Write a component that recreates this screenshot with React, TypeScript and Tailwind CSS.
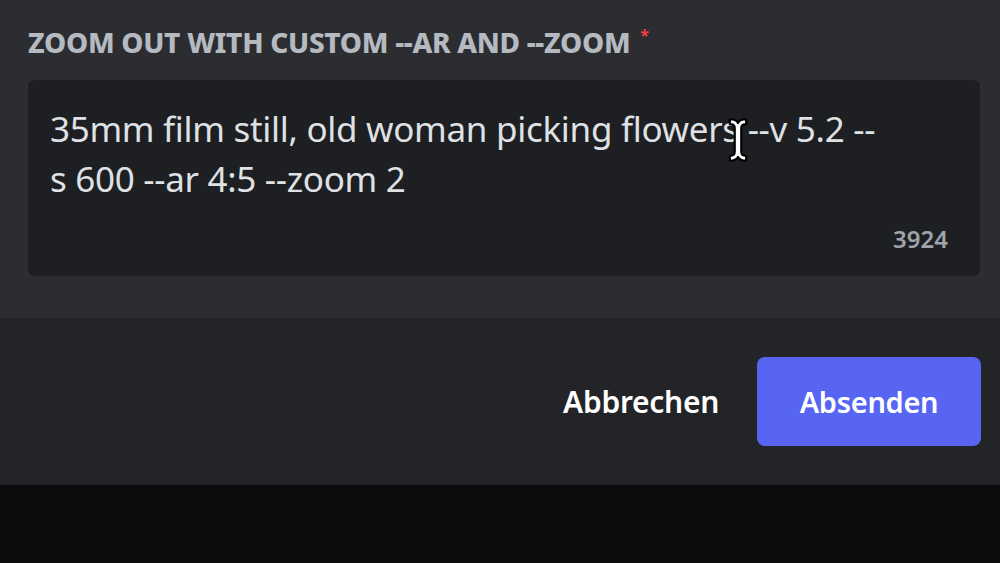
import React from "react";

function IBeam() {
  return (
    <svg
      viewBox="0 0 20 44"
      className="pointer-events-none absolute left-[726px] top-[116px] h-[48px] w-[24px]"
      aria-hidden
    >
      <path
        d="M2.5 3 C6 3 9 4 10 6.5 C11 4 14 3 17.5 3 L17.5 7.5 C14.5 7.5 13 8.5 13 11 L13 33 C13 35.5 14.5 36.5 17.5 36.5 L17.5 41 C14 41 11 40 10 37.5 C9 40 6 41 2.5 41 L2.5 36.5 C5.5 36.5 7 35.5 7 33 L7 11 C7 8.5 5.5 7.5 2.5 7.5 Z"
        fill="#ffffff"
        stroke="#000000"
        strokeWidth="2"
        strokeLinejoin="round"
      />
    </svg>
  );
}

export default function App() {
  return (
    <div
      className="relative flex h-[563px] w-[1000px] flex-col overflow-hidden bg-[#0c0c0d]"
      style={{ fontFamily: '"Noto Sans", "Open Sans", sans-serif' }}
    >
      <div className="flex h-[318px] flex-col bg-[#2b2d31] pl-[28px] pr-[20px] pt-[24px]">
        <div className="flex items-start gap-[10px]">
          <span className="text-[28px] font-extrabold uppercase leading-[36px] tracking-[-0.3px] text-[#b5bac1]">
            Zoom out with custom --ar and --zoom
          </span>
          <span className="mt-[2px] text-[16px] font-bold leading-[18px] text-[#f23f42]">*</span>
        </div>
        <div className="relative mt-[20px] h-[196px] rounded-[6px] bg-[#1e1f22]">
          <p className="absolute left-[22px] top-[24px] text-[35px] leading-[50px] tracking-[-0.3px] text-[#dfe1e4]">
            35mm film still, old woman picking flowers --v 5.2 --
            <br />s 600 --ar 4:5 --zoom 2
          </p>
          <span className="absolute bottom-[22px] right-[32px] text-[24px] font-semibold leading-[30px] text-[#9fa4ab]">
            3924
          </span>
        </div>
      </div>
      <div className="flex h-[167px] items-start justify-end gap-[38px] bg-[#232428] pr-[19px] pt-[39px]">
        <button className="mt-[20px] text-[30px] font-semibold leading-[50px] tracking-[-0.3px] text-white">
          Abbrechen
        </button>
        <button className="flex h-[89px] w-[224px] items-center justify-center rounded-[8px] bg-[#5865f2] text-[29px] font-semibold tracking-[-0.3px] text-white">
          Absenden
        </button>
      </div>
      <IBeam />
    </div>
  );
}
